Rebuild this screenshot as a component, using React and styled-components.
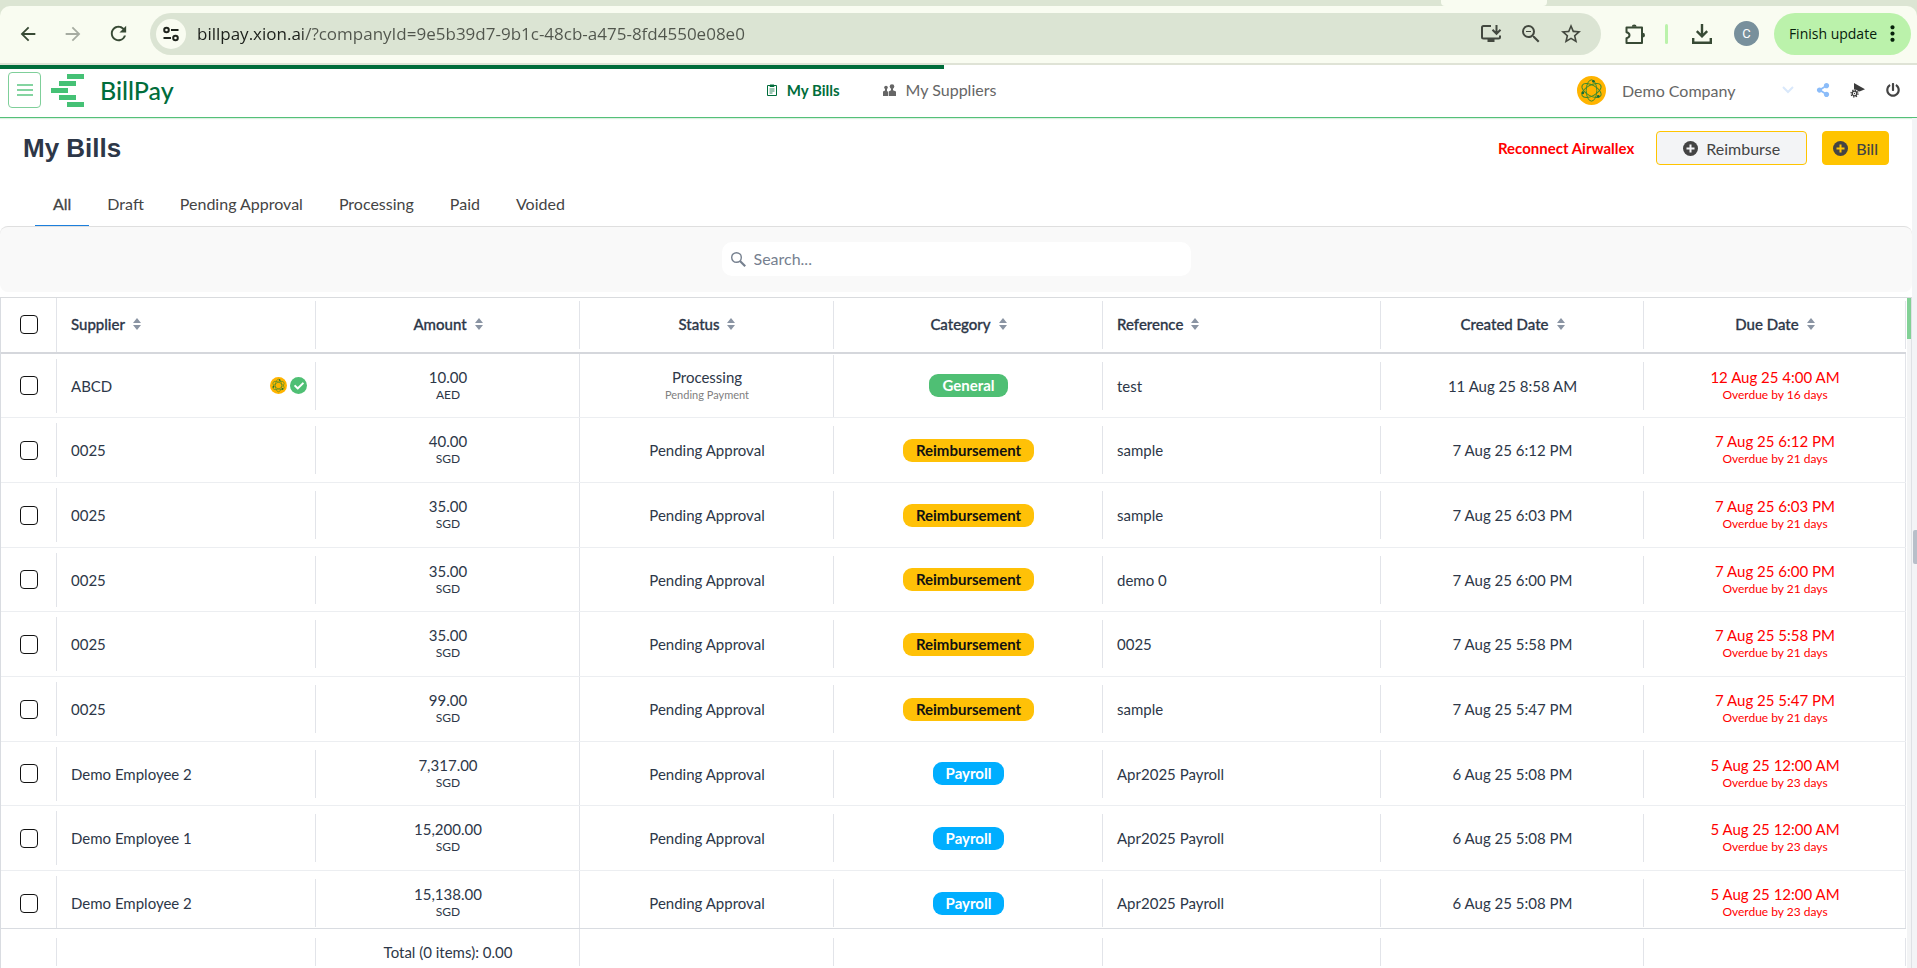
import React from "react";
import styled, { createGlobalStyle } from "styled-components";
import {
  MdArrowBack,
  MdArrowForward,
  MdRefresh,
  MdStarBorder,
  MdZoomOut,
  MdMoreVert,
} from "react-icons/md";
import { FaShareAlt, FaPowerOff, FaCheck } from "react-icons/fa";

const GlobalStyle = createGlobalStyle`
  * {
    box-sizing: border-box;
  }

  body {
    margin: 0;
    background: #fff;
    color: #2d3748;
    font-family: Lato, "Liberation Sans", sans-serif;
    font-size: 15px;
  }

  button,
  input,
  select {
    font: inherit;
    color: inherit;
  }

  button {
    cursor: pointer;
  }

  svg {
    display: block;
    flex: none;
  }
`;

const Page = styled.div`
  height: 100vh;
  display: flex;
  flex-direction: column;
  overflow: hidden;
`;

/* ---------- browser bar ---------- */

const TabStrip = styled.div`
  height: 6px;
  flex: none;
  display: flex;
  justify-content: flex-end;
  padding-right: 370px;
  background: #dce5d3;
`;

const ActiveTab = styled.div`
  width: 106px;
  background: #f9fcf1;
  border-radius: 0 0 4px 4px;
`;

const BarWrap = styled.div`
  flex: none;
  background: #dce5d3;
`;

const Toolbar = styled.div`
  height: 59px;
  display: flex;
  align-items: center;
  padding: 0 6px 2px 16px;
  background: #f9fcf1;
  border-bottom: 2px solid #dfe3d6;
  border-radius: 10px 10px 0 0;
  color: #384a35;
`;

const BarButton = styled.button`
  width: 24px;
  height: 24px;
  padding: 0;
  border: none;
  background: none;
  display: flex;
  align-items: center;
  justify-content: center;
  color: ${(p) => (p.$muted ? "#a6aca1" : "inherit")};
  margin-left: ${(p) => p.$before || 0}px;
  margin-right: ${(p) => p.$gap || 0}px;
`;

const AddressBar = styled.div`
  flex: 1;
  height: 42px;
  display: flex;
  align-items: center;
  padding: 0 18px 0 6px;
  border-radius: 21px;
  background: #dbe4d3;
  color: #43483f;
`;

const SiteInfo = styled.button`
  width: 30px;
  height: 30px;
  padding: 0;
  border: none;
  border-radius: 50%;
  background: #f9fcf1;
  display: flex;
  align-items: center;
  justify-content: center;
`;

/* the host name is darker than the rest of the address */
const Url = styled.input`
  flex: 1;
  min-width: 0;
  padding: 0;
  margin-left: 11px;
  border: none;
  outline: none;
  background: linear-gradient(to right, #1b1f1a 106px, #50554c 106px);
  background-clip: text;
  -webkit-text-fill-color: transparent;
  font-family: "Open Sans", sans-serif;
  font-size: 17px;
  line-height: 26px;
`;

const BarDivider = styled.span`
  width: 3px;
  height: 20px;
  border-radius: 2px;
  background: #bbf2ab;
  margin: 0 22px 0 18px;
`;

const ProfileButton = styled.button`
  width: 25px;
  height: 25px;
  padding: 0;
  margin-right: 15px;
  border: none;
  border-radius: 50%;
  background: #78909c;
  color: #fff;
  font-family: Roboto, sans-serif;
  font-size: 13px;
`;

const UpdateButton = styled.button`
  height: 42px;
  display: flex;
  align-items: center;
  gap: 3px;
  padding: 0 6px 0 15px;
  border: none;
  border-radius: 21px;
  background: #bbf2ab;
  color: #06210b;
  font-family: "Open Sans", sans-serif;
  font-size: 14px;
`;

/* ---------- app header ---------- */

const Progress = styled.div`
  height: 4px;
  width: 944px;
  max-width: 100%;
  flex: none;
  background: #006d3b;
`;

const Header = styled.header`
  flex: none;
  height: 49px;
  display: grid;
  grid-template-columns: 40% 1fr auto;
  align-items: center;
  padding-bottom: 6px;
  border-bottom: 1px solid #54c078;
  box-shadow: 0 1px 1px #dcefe2;
`;

const Brand = styled.div`
  display: flex;
  align-items: center;
  padding-left: 8px;
`;

const MenuButton = styled.button`
  width: 33px;
  height: 36px;
  padding: 0;
  margin-right: 10px;
  border: 1px solid #7fcf9a;
  border-radius: 4px;
  background: #fff;
  color: #5cc683;
  display: flex;
  align-items: center;
  justify-content: center;
`;

const BrandName = styled.span`
  margin-left: 16px;
  color: #006d3b;
  font-size: 25px;
  line-height: 32px;
  font-weight: 500;
`;

const Nav = styled.nav`
  display: flex;
  align-items: center;
  gap: 43px;
`;

const NavLink = styled.a`
  display: flex;
  align-items: center;
  gap: 10px;
  color: ${(p) => (p.$active ? "#006d3b" : "#666")};
  font-size: ${(p) => (p.$active ? 15 : 16)}px;
  font-weight: ${(p) => (p.$active ? 700 : 400)};
  line-height: 20px;
  text-decoration: none;
`;

const Account = styled.div`
  display: flex;
  align-items: center;
  padding-right: 16px;
  color: #444;
`;

const CompanyField = styled.label`
  display: flex;
  align-items: center;
  margin: 0 21px 0 16px;
`;

const CompanySelect = styled.select`
  width: 160px;
  padding: 0;
  border: none;
  background: none;
  appearance: none;
  color: #666;
  font-size: 16px;
`;

const IconButton = styled.button`
  width: 16px;
  height: 16px;
  padding: 0;
  border: none;
  background: none;
  color: ${(p) => p.$color || "#444"};
  margin-left: ${(p) => p.$gap || 0}px;
  display: flex;
  align-items: center;
  justify-content: center;
`;

/* ---------- page ---------- */

const Body = styled.div`
  flex: 1;
  min-height: 0;
  display: flex;
`;

const Main = styled.main`
  flex: 1;
  min-width: 0;
  display: flex;
  flex-direction: column;
`;

const PageScroll = styled.div`
  width: 5px;
  flex: none;
  padding: 412px 0 0 1px;
  background: #f3f4f6;
`;

const PageThumb = styled.div`
  height: 34px;
  background: #b8bfc9;
  border-radius: 2px 0 0 2px;
`;

const TitleRow = styled.div`
  display: flex;
  align-items: center;
  height: 60px;
  padding: 0 23px;
`;

const Title = styled.h1`
  margin: 0;
  flex: 1;
  font-family: "Liberation Sans", Arial, sans-serif;
  font-size: 26px;
  line-height: 32px;
`;

const Reconnect = styled.a`
  color: #f00;
  font-size: 15px;
  font-weight: 700;
  text-decoration: none;
  margin-right: 22px;
`;

const ActionButton = styled.button`
  height: 34px;
  display: flex;
  align-items: center;
  justify-content: center;
  gap: 8px;
  padding: 0 ${(p) => (p.$wide ? 26 : 10)}px;
  margin-left: ${(p) => (p.$wide ? 0 : 15)}px;
  border: 1px solid #ffc400;
  border-radius: 4px;
  background: ${(p) => (p.$wide ? "#f3f4f6" : "#ffc400")};
  color: #444;
  font-size: 16px;
  font-weight: ${(p) => (p.$wide ? 400 : 500)};
`;

const Tabs = styled.div`
  display: flex;
  height: 48px;
  padding-left: 35px;
`;

const Tab = styled.button`
  padding: 4px 18px 0;
  border: none;
  border-bottom: 1px solid ${(p) => (p.$active ? "#1c7fdc" : "transparent")};
  background: none;
  color: #444;
  font-size: 16px;
  -webkit-text-stroke: ${(p) => (p.$active ? "0.3px #444" : "0")};
`;

const SearchPanel = styled.div`
  display: flex;
  justify-content: center;
  padding: 15px 0 16px;
  margin-bottom: 5px;
  border-top: 1px solid #dfdfdf;
  border-radius: 8px;
  background: #f9f9f9;
`;

const SearchBox = styled.label`
  width: 469px;
  height: 34px;
  display: flex;
  align-items: center;
  gap: 8px;
  padding: 0 9px;
  border-radius: 10px;
  background: #fff;
  color: #76808f;
`;

const SearchInput = styled.input`
  flex: 1;
  min-width: 0;
  padding: 0 0 2px;
  border: none;
  outline: none;
  background: none;
  font-size: 16px;

  &::placeholder {
    color: #76808f;
    opacity: 1;
  }
`;

/* ---------- table ---------- */

const TableArea = styled.div`
  flex: 1;
  min-height: 0;
  display: flex;
  border-top: 1px solid #d9dbde;
`;

const TableScroll = styled.div`
  flex: 1;
  min-width: 0;
  overflow-y: auto;
  scrollbar-width: none;
`;

const TableTrack = styled.div`
  width: 6px;
  flex: none;
  background: linear-gradient(to right, #fff 1px, #f3f4f5 1px);
  border-right: 1px solid #dfe1e5;
`;

const TableThumb = styled.div`
  height: 41px;
  margin-left: 1px;
  background: #82d196;
`;

const Table = styled.table`
  width: 100%;
  table-layout: fixed;
  border-collapse: separate;
  border-spacing: 0;
  border-left: 1px solid #d9dce1;
`;

const Col = styled.col`
  width: ${(p) => p.$width}px;
`;

const HeadCell = styled.th`
  position: sticky;
  top: 0;
  height: 56px;
  padding: 0 14px 2px;
  border-bottom: 2px solid #d5d7dc;
  background: #fff linear-gradient(#e2e4e9, #e2e4e9) right center / 1px
    ${(p) => p.$line || "48px"} no-repeat;
  text-align: ${(p) => p.$align || "center"};
  font-size: 15px;
  font-weight: 500;
`;

const SortButton = styled.button`
  display: inline-flex;
  align-items: center;
  gap: 8px;
  padding: 0;
  border: none;
  background: none;
  -webkit-text-stroke: 0.3px #2d3748;
`;

const Row = styled.tr`
  height: 65px;

  &:nth-child(3n + 1) {
    height: 64px;
  }
`;

const Cell = styled.td`
  padding: 0 ${(p) => p.$padRight || 14}px 0 14px;
  border-bottom: 1px solid #eceef1;
  background: linear-gradient(#e2e4e9, #e2e4e9) right center / 1px
    ${(p) => p.$line || "48px"} no-repeat;
  text-align: ${(p) => p.$align || "center"};
  color: ${(p) => p.$color || "inherit"};
`;

const FootCell = styled.td`
  position: sticky;
  bottom: 0;
  height: 40px;
  padding: 7px 0 0;
  border-top: 1px solid #d9dce1;
  background: #fff linear-gradient(#e2e4e9, #e2e4e9) right bottom 2px / 1px
    ${(p) => p.$line || "28px"} no-repeat;
  text-align: center;
`;

const Check = styled.input`
  appearance: none;
  display: block;
  width: 18px;
  height: 19px;
  margin: 0 auto 0 5px;
  border: 1px solid #111;
  border-radius: 4px;
  background: #fff;

  &:checked {
    background: #54c078;
  }
`;

const Value = styled.div`
  line-height: 18px;
`;

const Sub = styled.div`
  font-size: ${(p) => p.$size || 12}px;
  line-height: 18px;
  color: ${(p) => p.$color || "inherit"};
`;

const SupplierCell = styled.div`
  display: flex;
  align-items: center;
  gap: 3px;

  span:first-child {
    flex: 1;
  }
`;

const Verified = styled.span`
  width: 17px;
  height: 17px;
  display: flex;
  align-items: center;
  justify-content: center;
  border-radius: 50%;
  background: #4fbf74;
  color: #fff;
`;

const badgeColors = {
  General: ["#4fbf74", "#fff"],
  Reimbursement: ["#ffc107", "#111"],
  Payroll: ["#00aeff", "#fff"],
};

const Badge = styled.span`
  display: inline-block;
  padding: 0 13px;
  border-radius: 9px;
  line-height: 23px;
  font-weight: 700;
  background: ${(p) => badgeColors[p.$kind][0]};
  color: ${(p) => badgeColors[p.$kind][1]};
`;

/* ---------- drawings ---------- */

const TuneIcon = () => (
  <svg width="16" height="16" viewBox="0 0 16 16" fill="none" stroke="#1f241d" strokeWidth="2">
    <circle cx="3.5" cy="4" r="2.3" />
    <path d="M8 4h7.5M.5 12H8" />
    <circle cx="12.5" cy="12" r="2.3" />
  </svg>
);

const InstallIcon = () => (
  <svg width="22" height="20" viewBox="0 0 22 20" fill="none" stroke="currentColor" strokeWidth="2">
    <path d="M11 2H3.5Q2 2 2 3.5V13q0 1.5 1.5 1.5h15Q20 14.5 20 13v-1.5" />
    <path d="M16.5 1v8M12.500 5.8l4 4 4-4" />
    <path d="M7.5 16.5h7" strokeWidth="3" />
  </svg>
);

const PuzzleIcon = () => (
  <svg width="22" height="22" viewBox="0 0 22 22" fill="none" stroke="currentColor" strokeWidth="2">
    <path d="M2.500 4.500h15.500v15.500H2.500v-4.800q3-.8 3-3t-3-3z" strokeLinejoin="round" />
    <path d="M7.800 3.800a2.400 2.400 0 0 1 4.800 0zM18.600 9.800a2.400 2.400 0 0 1 0 4.800z" fill="currentColor" stroke="none" />
  </svg>
);

const DownloadIcon = () => (
  <svg width="20" height="20" viewBox="0 0 20 20" fill="none" stroke="currentColor" strokeWidth="2.4">
    <path d="M10 0v12M4.800 7.200L10 12.400l5.200-5.200M1.200 14v4.800h17.600V14" />
  </svg>
);

const MenuIcon = () => (
  <svg width="16" height="14" viewBox="0 0 16 14" stroke="currentColor" strokeWidth="1.6">
    <path d="M0 2h16M0 7h16M0 12h16" />
  </svg>
);

const Logo = () => (
  <svg width="33" height="33" viewBox="0 0 33 33" fill="#45c175">
    <path d="M16 0h17v5H16zM8 7h17v5H8zM0 14h17v5H0zM8 21h17v5H8zM16 28h17v5H16z" />
  </svg>
);

const BillIcon = () => (
  <svg width="10" height="12" viewBox="0 0 10 12" fill="none" stroke="#006d3b">
    <path d="M.5 1.500h9v10h-9z" />
    <path d="M3 1h4v1.500H3z" fill="#006d3b" />
    <path d="M2.500 5h5M2.500 7h5M2.500 9h3" strokeWidth=".8" />
  </svg>
);

const SuppliersIcon = () => (
  <svg width="13" height="12" viewBox="0 0 13 12" fill="#666">
    <circle cx="3" cy="3.600" r="1.800" />
    <circle cx="9" cy="2.500" r="2.300" />
    <path d="M2 5h2v2l1 .8V12H0V7.500L2 6.500zM8 4h2v2.200l3 1.300V12H5.700V7.500L8 6.200z" />
  </svg>
);

const Atom = ({ size }) => (
  <svg width={size} height={size} viewBox="0 0 30 30">
    <circle cx="15" cy="15" r="15" fill="#ffb400" />
    <g fill="none" stroke="#3c8a2e" strokeWidth="1">
      <ellipse cx="15" cy="15" rx="11" ry="5.5" transform="rotate(30 15 15)" />
      <ellipse cx="15" cy="15" rx="11" ry="5.5" transform="rotate(90 15 15)" />
      <ellipse cx="15" cy="15" rx="11" ry="5.5" transform="rotate(150 15 15)" />
    </g>
    <g fill="#0f6b3a">
      <circle cx="17" cy="5.5" r="1.4" />
      <circle cx="6" cy="17.5" r="1.4" />
      <circle cx="22" cy="21" r="1.4" />
    </g>
  </svg>
);

const ChevronIcon = () => (
  <svg width="12" height="8" viewBox="0 0 12 8" fill="none" stroke="#d9e8fb" strokeWidth="2">
    <path d="M1 1l5 5 5-5" />
  </svg>
);

const FlagGearIcon = () => (
  <svg width="15" height="15" viewBox="0 0 15 15">
    <path d="M4 0l11 6.200-5.500 2.300L4 7z" fill="#3c3c3c" />
    <circle cx="4.500" cy="10.500" r="3.900" fill="#fff" />
    <circle cx="4.500" cy="10.500" r="2.300" fill="none" stroke="#3c3c3c" strokeWidth="1.300" />
    <circle cx="4.500" cy="10.500" r="3.500" fill="none" stroke="#3c3c3c" strokeWidth="1.300" strokeDasharray="1.300 1.450" />
    <circle cx="4.500" cy="10.500" r=".7" fill="#3c3c3c" />
  </svg>
);

const PowerIcon = () => <FaPowerOff size={14} />;

const PlusIcon = ({ cross }) => (
  <svg width="15" height="15" viewBox="0 0 15 15">
    <circle cx="7.5" cy="7.5" r="7.5" fill="#444" />
    <path d="M7.500 3.500v8M3.500 7.500h8" stroke={cross} strokeWidth="2" />
  </svg>
);

const SearchIcon = () => (
  <svg width="15" height="15" viewBox="0 0 15 15" fill="none" stroke="currentColor">
    <circle cx="5.5" cy="5.5" r="4.8" strokeWidth="1.4" />
    <path d="M9 9l5.200 5.200" strokeWidth="2.2" />
  </svg>
);

const SortIcon = () => (
  <svg width="8" height="12" viewBox="0 0 8 12" fill="#8a94a3">
    <path d="M4 0l4 5H0zM0 7h8l-4 5z" />
  </svg>
);

/* ---------- data ---------- */

const tabs = ["All", "Draft", "Pending Approval", "Processing", "Paid", "Voided"];

const columns = [
  { name: "Supplier", width: 259, align: "left" },
  { name: "Amount", width: 264 },
  { name: "Status", width: 254 },
  { name: "Category", width: 269 },
  { name: "Reference", width: 278, align: "left" },
  { name: "Created Date", width: 263 },
  { name: "Due Date", width: 262 },
];

const bills = [
  ["ABCD", "10.00", "AED", "General", "test", "11 Aug 25 8:58 AM", "12 Aug 25 4:00 AM", 16],
  ["0025", "40.00", "SGD", "Reimbursement", "sample", "7 Aug 25 6:12 PM", "7 Aug 25 6:12 PM", 21],
  ["0025", "35.00", "SGD", "Reimbursement", "sample", "7 Aug 25 6:03 PM", "7 Aug 25 6:03 PM", 21],
  ["0025", "35.00", "SGD", "Reimbursement", "demo 0", "7 Aug 25 6:00 PM", "7 Aug 25 6:00 PM", 21],
  ["0025", "35.00", "SGD", "Reimbursement", "0025", "7 Aug 25 5:58 PM", "7 Aug 25 5:58 PM", 21],
  ["0025", "99.00", "SGD", "Reimbursement", "sample", "7 Aug 25 5:47 PM", "7 Aug 25 5:47 PM", 21],
  ["Demo Employee 2", "7,317.00", "SGD", "Payroll", "Apr2025 Payroll", "6 Aug 25 5:08 PM", "5 Aug 25 12:00 AM", 23],
  ["Demo Employee 1", "15,200.00", "SGD", "Payroll", "Apr2025 Payroll", "6 Aug 25 5:08 PM", "5 Aug 25 12:00 AM", 23],
  ["Demo Employee 2", "15,138.00", "SGD", "Payroll", "Apr2025 Payroll", "6 Aug 25 5:08 PM", "5 Aug 25 12:00 AM", 23],
];

const BrowserBar = () => (
  <>
    <TabStrip>
      <ActiveTab />
    </TabStrip>
    <BarWrap>
      <Toolbar>
        <BarButton $gap={21} aria-label="Back">
          <MdArrowBack size={22} />
        </BarButton>
        <BarButton $gap={21} $muted aria-label="Forward">
          <MdArrowForward size={22} />
        </BarButton>
        <BarButton $gap={20} aria-label="Reload">
          <MdRefresh size={23} />
        </BarButton>
        <AddressBar>
          <SiteInfo aria-label="Site information">
            <TuneIcon />
          </SiteInfo>
          <Url
            aria-label="Address"
            defaultValue="billpay.xion.ai/?companyId=9e5b39d7-9b1c-48cb-a475-8fd4550e08e0"
          />
          <BarButton $gap={16} aria-label="Install app">
            <InstallIcon />
          </BarButton>
          <BarButton $gap={16} aria-label="Zoom">
            <MdZoomOut size={24} />
          </BarButton>
          <BarButton aria-label="Bookmark">
            <MdStarBorder size={24} />
          </BarButton>
        </AddressBar>
        <BarButton $before={22} aria-label="Extensions">
          <PuzzleIcon />
        </BarButton>
        <BarDivider />
        <BarButton $gap={20} aria-label="Downloads">
          <DownloadIcon />
        </BarButton>
        <ProfileButton aria-label="Profile C">C</ProfileButton>
        <UpdateButton>
          Finish update
          <MdMoreVert size={25} />
        </UpdateButton>
      </Toolbar>
    </BarWrap>
  </>
);

const AppHeader = () => (
  <Header>
    <Brand>
      <MenuButton aria-label="Menu">
        <MenuIcon />
      </MenuButton>
      <Logo />
      <BrandName>BillPay</BrandName>
    </Brand>
    <Nav>
      <NavLink href="#bills" $active>
        <BillIcon />
        My Bills
      </NavLink>
      <NavLink href="#suppliers">
        <SuppliersIcon />
        My Suppliers
      </NavLink>
    </Nav>
    <Account>
      <Atom size={29} />
      <CompanyField>
        <CompanySelect aria-label="Company">
          <option>Demo Company</option>
        </CompanySelect>
        <ChevronIcon />
      </CompanyField>
      <IconButton $color="#8bbcf9" aria-label="Share">
        <FaShareAlt size={14} />
      </IconButton>
      <IconButton $gap={18} aria-label="Setup">
        <FlagGearIcon />
      </IconButton>
      <IconButton $gap={20} aria-label="Log out">
        <PowerIcon />
      </IconButton>
    </Account>
  </Header>
);

const BillRow = ({ bill, first }) => {
  const [supplier, amount, currency, category, reference, created, due, days] = bill;

  return (
    <Row>
      <Cell $line="54px">
        <Check type="checkbox" aria-label={`Select ${supplier}`} />
      </Cell>
      <Cell $align="left" $padRight={9}>
        <SupplierCell>
          <span>{supplier}</span>
          {first && (
            <>
              <Atom size={17} />
              <Verified>
                <FaCheck size={10} />
              </Verified>
            </>
          )}
        </SupplierCell>
      </Cell>
      <Cell $line="100%">
        <Value>{amount}</Value>
        <Sub>{currency}</Sub>
      </Cell>
      <Cell $line={first ? "62px" : "48px"}>
        {first ? (
          <>
            <Value>Processing</Value>
            <Sub $size={11} $color="#808080">
              Pending Payment
            </Sub>
          </>
        ) : (
          "Pending Approval"
        )}
      </Cell>
      <Cell>
        <Badge $kind={category}>{category}</Badge>
      </Cell>
      <Cell $align="left">{reference}</Cell>
      <Cell>{created}</Cell>
      <Cell $color="#f00" $line="100%">
        <Value>{due}</Value>
        <Sub>Overdue by {days} days</Sub>
      </Cell>
    </Row>
  );
};

const App = () => {
  const [activeTab, setActiveTab] = React.useState("All");

  return (
    <Page>
      <GlobalStyle />
      <BrowserBar />
      <Progress />
      <AppHeader />
      <Body>
        <Main>
          <TitleRow>
            <Title>My Bills</Title>
            <Reconnect href="#reconnect">Reconnect Airwallex</Reconnect>
            <ActionButton $wide>
              <PlusIcon cross="#f3f4f6" />
              Reimburse
            </ActionButton>
            <ActionButton>
              <PlusIcon cross="#ffc400" />
              Bill
            </ActionButton>
          </TitleRow>
          <Tabs>
            {tabs.map((name) => (
              <Tab key={name} $active={name === activeTab} onClick={() => setActiveTab(name)}>
                {name}
              </Tab>
            ))}
          </Tabs>
          <SearchPanel>
            <SearchBox>
              <SearchIcon />
              <SearchInput type="text" placeholder="Search..." aria-label="Search" />
            </SearchBox>
          </SearchPanel>
          <TableArea>
            <TableScroll>
              <Table>
                <colgroup>
                  <Col $width={56} />
                  {columns.map((c) => (
                    <Col key={c.name} $width={c.width} />
                  ))}
                </colgroup>
                <thead>
                  <tr>
                    <HeadCell $line="100%">
                      <Check type="checkbox" aria-label="Select all" />
                    </HeadCell>
                    {columns.map((c) => (
                      <HeadCell key={c.name} $align={c.align}>
                        <SortButton>
                          {c.name}
                          <SortIcon />
                        </SortButton>
                      </HeadCell>
                    ))}
                  </tr>
                </thead>
                <tbody>
                  {bills.map((bill, i) => (
                    <BillRow key={i} bill={bill} first={i === 0} />
                  ))}
                </tbody>
                <tfoot>
                  <tr>
                    <FootCell />
                    <FootCell />
                    <FootCell $line="100%">Total (0 items): 0.00</FootCell>
                    <FootCell />
                    <FootCell />
                    <FootCell />
                    <FootCell />
                    <FootCell />
                  </tr>
                </tfoot>
              </Table>
            </TableScroll>
            <TableTrack>
              <TableThumb />
            </TableTrack>
          </TableArea>
        </Main>
        <PageScroll>
          <PageThumb />
        </PageScroll>
      </Body>
    </Page>
  );
};

export default App;
